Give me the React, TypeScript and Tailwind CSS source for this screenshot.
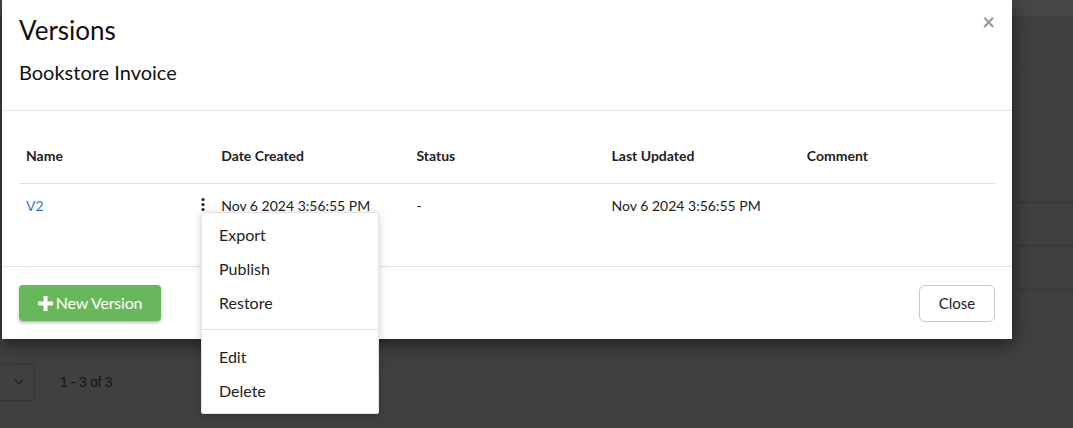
import { ChevronDown } from 'lucide-react'

const columns = ['Name', 'Date Created', 'Status', 'Last Updated', 'Comment']

function Kebab() {
  return (
    <svg width="6" height="16" viewBox="0 0 6 16" className="text-[#222]">
      <circle cx="3" cy="2.5" r="1.6" fill="currentColor" />
      <circle cx="3" cy="7.5" r="1.6" fill="currentColor" />
      <circle cx="3" cy="12.5" r="1.6" fill="currentColor" />
    </svg>
  )
}

function PlusIcon() {
  return (
    <svg width="15" height="15" viewBox="0 0 15 15">
      <path d="M5.5 0h4v5.5H15v4H9.5V15h-4V9.5H0v-4h5.5z" fill="white" />
    </svg>
  )
}

function MenuItem({ label }: { label: string }) {
  return (
    <div className="h-[34px] flex items-center pl-[17px] text-[16px] text-[#222]">
      {label}
    </div>
  )
}

export default function App() {
  return (
    <div className="relative w-[1073px] h-[428px] overflow-hidden bg-[#404040] font-['Lato',sans-serif]">
      {/* page behind the overlay */}
      <div className="flex flex-col">
        <div className="h-[16px] bg-[#474747]" />
        <div className="h-[51px] border-b border-[#3e3e3e]" />
        <div className="h-[136px] border-b border-[#363636]" />
        <div className="h-[43px] border-b border-[#363636]" />
        <div className="h-[44px] border-b border-[#363636]" />
        <div className="mt-[73px] flex items-center">
          <div className="w-[35px] h-[38px] border border-l-0 border-[#363636] flex items-center justify-end pr-[8px]">
            <ChevronDown className="w-[14px] h-[14px] text-[#222]" strokeWidth={2.5} />
          </div>
          <span className="ml-[25px] text-[14px] text-[#151515] font-['Liberation_Sans',sans-serif] tracking-[-0.3px]">
            1 - 3 of 3
          </span>
        </div>
      </div>

      {/* modal */}
      <div className="absolute left-[2px] top-0 w-[1010px] h-[339px] bg-white shadow-[0_5px_18px_rgba(0,0,0,0.55)] flex flex-col">
        <div className="relative h-[111px] border-b border-[#e2e2e2] px-[17px] pt-[12px]">
          <div className="text-[26px] leading-[36px] text-[#111]">Versions</div>
          <div className="mt-[11px] text-[20px] leading-[26px] text-[#111]">Bookstore Invoice</div>
          <div className="absolute right-[17px] top-[12px] text-[22px] leading-[20px] text-[#999] font-bold">×</div>
        </div>

        <div className="relative h-[156px] border-b border-[#e2e2e2] px-[17px] pt-[17px]">
          <div className="grid grid-cols-5 h-[56px] items-center border-b border-[#e0e0e0] text-[14px] font-bold text-[#222]">
            {columns.map((c) => (
              <div key={c} className="pl-[7px]">{c}</div>
            ))}
          </div>
          <div className="grid grid-cols-5 h-[42px] items-center text-[14px] text-[#222]">
            <div className="pl-[7px] flex items-center justify-between pr-[8px]">
              <span className="text-[#337ab7]">V2</span>
              <Kebab />
            </div>
            <div className="pl-[7px]">Nov 6 2024 3:56:55 PM</div>
            <div className="pl-[7px]">-</div>
            <div className="pl-[7px]">Nov 6 2024 3:56:55 PM</div>
            <div className="pl-[7px]" />
          </div>
        </div>

        <div className="flex-1 px-[17px] pt-[18px] flex items-start justify-between">
          <button className="h-[36px] w-[142px] rounded-[4px] bg-[#68b85b] shadow-[0_2px_3px_rgba(0,0,0,0.25)] flex items-center justify-center gap-[3px] text-white text-[16px]">
            <PlusIcon />
            <span className="tracking-[-0.2px]">New Version</span>
          </button>
          <button className="h-[37px] w-[76px] rounded-[6px] border border-[#c8c8c8] bg-white text-[15px] text-[#222]">
            Close
          </button>
        </div>

        {/* kebab menu */}
        <div className="absolute left-[199px] top-[212px] w-[178px] bg-white border border-[#e4e4e4] rounded-[2px] shadow-[0_2px_10px_rgba(0,0,0,0.18)] pt-[5px] pb-[5px]">
          <MenuItem label="Export" />
          <MenuItem label="Publish" />
          <MenuItem label="Restore" />
          <div className="mt-[9px] mb-[10px] h-px bg-[#e0e0e0]" />
          <MenuItem label="Edit" />
          <MenuItem label="Delete" />
        </div>
      </div>
    </div>
  )
}
